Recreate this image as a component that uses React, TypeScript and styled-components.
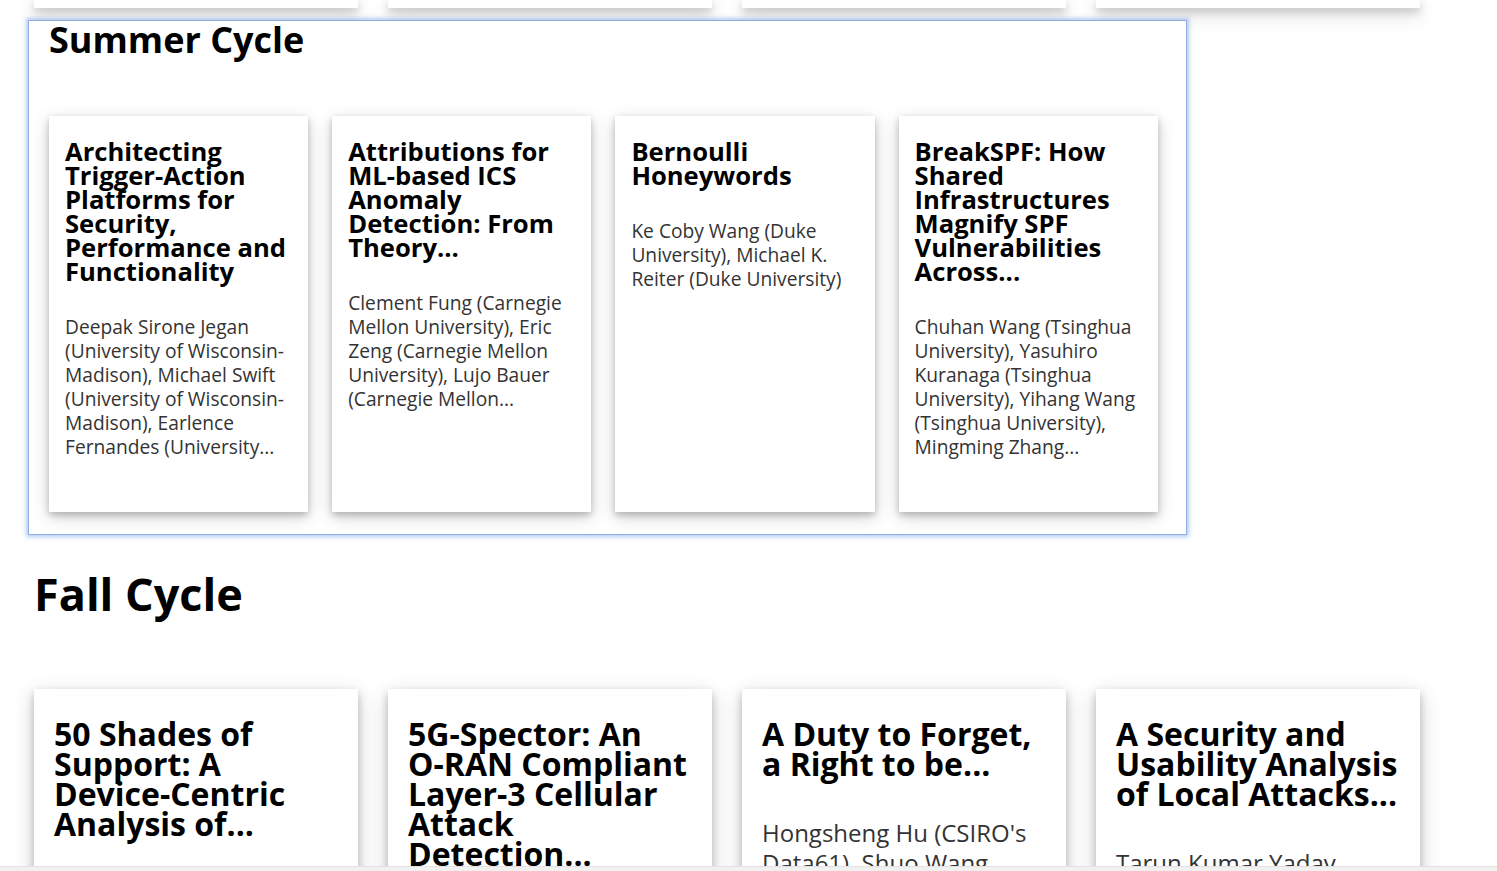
import React from 'react';
import styled, { createGlobalStyle } from 'styled-components';

const GlobalStyle = createGlobalStyle`
  html, body {
    margin: 0;
    padding: 0;
    background: #fff;
    overflow: hidden;
  }
  body {
    font-family: "Open Sans", "Noto Sans", sans-serif;
    color: #000;
  }
`;

const Page = styled.div`
  width: 1497px;
  height: 871px;
  overflow: hidden;
`;

const cardShadow = '0 4px 8px 0 rgba(0, 0, 0, 0.2), 0 6px 20px 0 rgba(0, 0, 0, 0.19)';

// bottoms of the previous row, scrolled out of view
const ClippedRow = styled.div`
  display: flex;
  gap: 30px;
  padding-left: 34px;
  height: 8px;
`;

const Stub = styled.div`
  width: 324px;
  height: 8px;
  background: #fff;
  box-shadow: ${cardShadow};
`;

const ActiveFrame = styled.section`
  position: relative;
  margin: 12px 0 0 28px;
  width: 1159px;
  box-sizing: border-box;
  border: 1px solid #8eaee4;
  box-shadow: 0 0 4px 2px rgba(110, 155, 230, 0.5);
  background: #fff;
`;

const Zoomed = styled.div<{ $zoom: number }>`
  zoom: ${(p) => p.$zoom};
`;

const Section = styled.div<{ $padLeft: number; $padBottom: number }>`
  display: flex;
  flex-direction: column;
  padding: 0 0 ${(p) => p.$padBottom}px ${(p) => p.$padLeft}px;
`;

const Heading = styled.h1`
  margin: 0 0 71px;
  font-size: 45px;
  line-height: 48px;
  font-weight: 700;
  color: #000;
`;

const Row = styled.div`
  display: flex;
  gap: 30px;
`;

const Card = styled.article`
  width: 324px;
  height: 495px;
  flex: none;
  box-sizing: border-box;
  padding: 30px 20px;
  background: #fff;
  box-shadow: ${cardShadow};
`;

const Title = styled.h3`
  margin: 0 0 39px;
  font-size: 32px;
  line-height: 30px;
  font-weight: 700;
  color: #000;
`;

const NoBreak = styled.span`
  white-space: nowrap;
`;

const Authors = styled.p`
  margin: 0;
  font-size: 24px;
  line-height: 30px;
  font-weight: 400;
  color: #333;
`;

const FallBlock = styled.div`
  margin-top: 35px;
`;

const ScrollEdge = styled.div`
  position: fixed;
  left: 0;
  right: 0;
  bottom: 0;
  height: 4px;
  background: #f1f1f1;
  border-top: 1px solid #e2e2e2;
`;

type Paper = { id: string; title: React.ReactNode; authors: string };

const summer: Paper[] = [
  {
    id: 'tap',
    title: 'Architecting Trigger-Action Platforms for Security, Performance and Functionality',
    authors:
      'Deepak Sirone Jegan (University of Wisconsin-Madison), Michael Swift (University of Wisconsin-Madison), Earlence Fernandes (University...',
  },
  {
    id: 'ics',
    title: 'Attributions for ML-based ICS Anomaly Detection: From Theory...',
    authors:
      'Clement Fung (Carnegie Mellon University), Eric Zeng (Carnegie Mellon University), Lujo Bauer (Carnegie Mellon...',
  },
  {
    id: 'honey',
    title: 'Bernoulli Honeywords',
    authors: 'Ke Coby Wang (Duke University), Michael K. Reiter (Duke University)',
  },
  {
    id: 'spf',
    title: 'BreakSPF: How Shared Infrastructures Magnify SPF Vulnerabilities Across...',
    authors:
      'Chuhan Wang (Tsinghua University), Yasuhiro Kuranaga (Tsinghua University), Yihang Wang (Tsinghua University), Mingming Zhang...',
  },
];

const fall: Paper[] = [
  {
    id: 'shades',
    title: (
      <>
        50 Shades of Support: A <NoBreak>Device-Centric</NoBreak> Analysis of...
      </>
    ),
    authors: 'Abbas Acar (Florida International University), Güliz Seray Tuncay...',
  },
  {
    id: 'spector',
    title: (
      <>
        5G-Spector: An <NoBreak>O-RAN</NoBreak> Compliant Layer-3 Cellular Attack Detection...
      </>
    ),
    authors: 'Haohuang Wen (The Ohio State University), Phillip Porras (SRI...',
  },
  {
    id: 'forget',
    title: 'A Duty to Forget, a Right to be...',
    authors: "Hongsheng Hu (CSIRO's Data61), Shuo Wang (CSIRO's Data61), Tianqing Zhu...",
  },
  {
    id: 'local',
    title: 'A Security and Usability Analysis of Local Attacks...',
    authors: 'Tarun Kumar Yadav (Brigham Young University), Kent Seamons...',
  },
];

const PaperCard: React.FC<{ paper: Paper }> = ({ paper }) => (
  <Card>
    <Title>{paper.title}</Title>
    <Authors>{paper.authors}</Authors>
  </Card>
);

const App: React.FC = () => {
  return (
    <Page>
      <GlobalStyle />
      <ClippedRow>
        <Stub />
        <Stub />
        <Stub />
        <Stub />
      </ClippedRow>

      <ActiveFrame>
        <Zoomed $zoom={0.8}>
          <Section $padLeft={25} $padBottom={27}>
            <Heading>Summer Cycle</Heading>
            <Row>
              {summer.map((p) => (
                <PaperCard key={p.id} paper={p} />
              ))}
            </Row>
          </Section>
        </Zoomed>
      </ActiveFrame>

      <FallBlock>
        <Section $padLeft={34} $padBottom={30}>
          <Heading>Fall Cycle</Heading>
          <Row>
            {fall.map((p) => (
              <PaperCard key={p.id} paper={p} />
            ))}
          </Row>
        </Section>
      </FallBlock>

      <ScrollEdge />
    </Page>
  );
};

export default App;
